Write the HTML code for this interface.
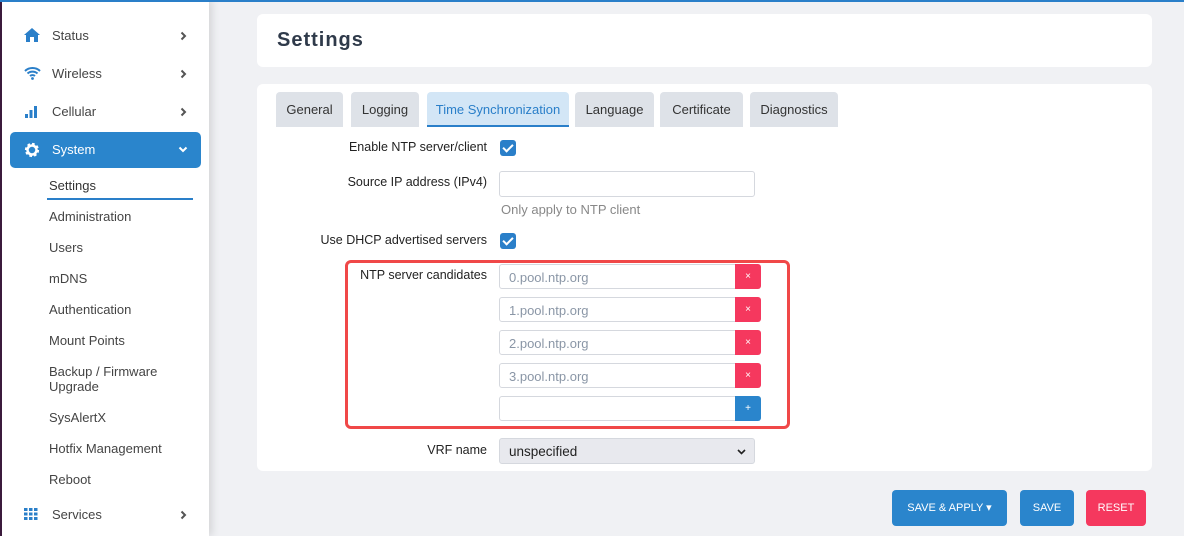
<!DOCTYPE html>
<html><head><meta charset="utf-8"><style>
*{box-sizing:border-box;margin:0;padding:0}
body{width:1184px;height:536px;overflow:hidden;background:#f0f1f4;font-family:"Liberation Sans",sans-serif;position:relative;color:#333}
.a{position:absolute}
#top{left:0;top:0;width:1184px;height:2px;background:#2a7fc9}
#side{left:0;top:0;width:209px;height:536px;background:#fff;box-shadow:3px 0 8px rgba(0,0,0,.12)}
#pl{left:0;top:0;width:2px;height:536px;background:#3b1a3c}
.nav{position:absolute;left:10px;width:191px;height:36px;font-size:13px;color:#444}
.nav .t{position:absolute;left:42px;top:10px}
.nav .c{position:absolute;right:14px;top:13px}
.nav svg.i{position:absolute;left:14px;top:10px}
.sub{position:absolute;left:49px;font-size:13px;color:#444}
.card{background:#fff;border-radius:6px}
.tab{position:absolute;top:92px;height:35px;background:#dee2e8;border-radius:4px 4px 0 0;font-size:13px;color:#333;text-align:center;line-height:35px}
.lbl{position:absolute;right:697px;font-size:12.5px;color:#222;text-align:right}
.cb{position:absolute;left:500px;width:16px;height:16px;background:#2a7fc9;border-radius:3px}
.cb:after{content:"";position:absolute;left:5px;top:2px;width:4px;height:8px;border:solid #fff;border-width:0 2px 2px 0;transform:rotate(45deg)}
.inp{position:absolute;left:499px;width:237px;height:25px;border:1px solid #d5d8de;border-radius:3px 0 0 3px;background:#fff;font-size:13px;color:#8a96a6;padding:5px 9px}
.x{position:absolute;left:735px;width:26px;height:25px;background:#f5385e;border-radius:0 3px 3px 0;color:#fff;font-size:10px;text-align:center;line-height:25px}
.btn{position:absolute;top:490px;height:36px;border-radius:4px;color:#fff;font-size:11px;text-align:center;line-height:36px}
</style></head><body>
<div class="a" id="side">
 <div class="nav" style="top:18px"><svg class="i" width="16" height="14" viewBox="0 0 16 14"><path d="M8 0L0 7h2v7h4V9h4v5h4V7h2z" fill="#2a7fc9"/></svg><span class="t">Status</span><svg class="c" width="7" height="10" viewBox="0 0 7 10"><path d="M1.5 1.5L5 5L1.5 8.5" stroke="#555" stroke-width="2" fill="none"/></svg></div>
 <div class="nav" style="top:56px"><svg class="i" width="17" height="14" viewBox="0 0 17 14"><path d="M1 5a11 11 0 0 1 15 0M3.5 7.5a7.5 7.5 0 0 1 10 0M6 10a4 4 0 0 1 5 0" stroke="#2a7fc9" stroke-width="2" fill="none"/><circle cx="8.5" cy="12.5" r="1.4" fill="#2a7fc9"/></svg><span class="t">Wireless</span><svg class="c" width="7" height="10" viewBox="0 0 7 10"><path d="M1.5 1.5L5 5L1.5 8.5" stroke="#555" stroke-width="2" fill="none"/></svg></div>
 <div class="nav" style="top:94px"><svg class="i" width="14" height="14" viewBox="0 0 14 14"><rect x="1" y="10" width="3" height="4" fill="#2a7fc9"/><rect x="5.5" y="6" width="3" height="8" fill="#2a7fc9"/><rect x="10" y="2" width="3" height="12" fill="#2a7fc9"/></svg><span class="t">Cellular</span><svg class="c" width="7" height="10" viewBox="0 0 7 10"><path d="M1.5 1.5L5 5L1.5 8.5" stroke="#555" stroke-width="2" fill="none"/></svg></div>
 <div class="nav" style="top:132px;background:#2a85cc;border-radius:5px;color:#fff"><svg class="i" width="16" height="16" viewBox="0 0 16 16"><circle cx="8" cy="8" r="5.5" fill="none" stroke="#fff" stroke-width="3.2" stroke-dasharray="2.4 1.9"/><circle cx="8" cy="8" r="4.5" fill="none" stroke="#fff" stroke-width="2.5"/></svg><span class="t">System</span><svg class="c" style="top:14px;right:13px" width="10" height="7" viewBox="0 0 10 7"><path d="M1.5 1.5L5 5L8.5 1.5" stroke="#fff" stroke-width="2" fill="none"/></svg></div>
 <div class="sub" style="top:178px;color:#333">Settings</div>
 <div class="a" style="left:47px;top:198px;width:146px;height:2px;background:#2a7fc9"></div>
 <div class="sub" style="top:209px">Administration</div>
 <div class="sub" style="top:240px">Users</div>
 <div class="sub" style="top:271px">mDNS</div>
 <div class="sub" style="top:302px">Authentication</div>
 <div class="sub" style="top:333px">Mount Points</div>
 <div class="sub" style="top:364px;line-height:15px">Backup / Firmware<br>Upgrade</div>
 <div class="sub" style="top:410px">SysAlertX</div>
 <div class="sub" style="top:441px">Hotfix Management</div>
 <div class="sub" style="top:472px">Reboot</div>
 <div class="nav" style="top:497px"><svg class="i" width="14" height="14" viewBox="0 0 14 14" fill="#2a7fc9"><rect x="0" y="1" width="3.5" height="3"/><rect x="5" y="1" width="3.5" height="3"/><rect x="10" y="1" width="3.5" height="3"/><rect x="0" y="5.5" width="3.5" height="3"/><rect x="5" y="5.5" width="3.5" height="3"/><rect x="10" y="5.5" width="3.5" height="3"/><rect x="0" y="10" width="3.5" height="3"/><rect x="5" y="10" width="3.5" height="3"/><rect x="10" y="10" width="3.5" height="3"/></svg><span class="t">Services</span><svg class="c" width="7" height="10" viewBox="0 0 7 10"><path d="M1.5 1.5L5 5L1.5 8.5" stroke="#555" stroke-width="2" fill="none"/></svg></div>
</div>
<div class="a" id="pl"></div>
<div class="a" id="top"></div>
<div class="a card" style="left:257px;top:14px;width:895px;height:53px"><div style="position:absolute;left:20px;top:15px;font-size:20px;font-weight:bold;color:#2f3a4a;letter-spacing:1px">Settings</div></div>
<div class="a card" style="left:257px;top:84px;width:895px;height:387px"></div>
<div class="tab" style="left:276px;width:67px">General</div>
<div class="tab" style="left:351px;width:68px">Logging</div>
<div class="tab" style="left:427px;width:142px;background:#d3e6f6;color:#2a7fc9;border-bottom:2px solid #2a7fc9">Time Synchronization</div>
<div class="tab" style="left:575px;width:79px">Language</div>
<div class="tab" style="left:660px;width:83px">Certificate</div>
<div class="tab" style="left:750px;width:88px">Diagnostics</div>
<div class="lbl" style="top:140px">Enable NTP server/client</div><div class="cb" style="top:140px"></div>
<div class="lbl" style="top:175px">Source IP address (IPv4)</div>
<div class="a" style="left:499px;top:171px;width:256px;height:26px;border:1px solid #d5d8de;border-radius:3px;background:#fff"></div>
<div class="a" style="left:501px;top:202px;font-size:13px;color:#888">Only apply to NTP client</div>
<div class="lbl" style="top:233px">Use DHCP advertised servers</div><div class="cb" style="top:233px"></div>
<div class="a" style="left:345px;top:260px;width:445px;height:169px;border:3px solid #f04848;border-radius:6px"></div>
<div class="lbl" style="top:268px">NTP server candidates</div>
<div class="inp" style="top:264px">0.pool.ntp.org</div><div class="x" style="top:264px">×</div>
<div class="inp" style="top:297px">1.pool.ntp.org</div><div class="x" style="top:297px">×</div>
<div class="inp" style="top:330px">2.pool.ntp.org</div><div class="x" style="top:330px">×</div>
<div class="inp" style="top:363px">3.pool.ntp.org</div><div class="x" style="top:363px">×</div>
<div class="inp" style="top:396px"></div><div class="x" style="top:396px;background:#2a85cc">+</div>
<div class="lbl" style="top:443px">VRF name</div>
<div class="a" style="left:499px;top:438px;width:256px;height:26px;border:1px solid #d5d8de;border-radius:3px;background:#e8e9ee;font-size:13.5px;color:#222;padding:5px 9px">unspecified<svg style="position:absolute;right:8px;top:10px" width="9" height="6" viewBox="0 0 9 6"><path d="M1 1L4.5 4.5L8 1" stroke="#222" stroke-width="1.6" fill="none"/></svg></div>
<div class="btn" style="left:892px;width:115px;background:#2a85cc">SAVE &amp; APPLY ▾</div>
<div class="btn" style="left:1020px;width:54px;background:#2a85cc">SAVE</div>
<div class="btn" style="left:1086px;width:60px;background:#f5385e">RESET</div>
</body></html>
